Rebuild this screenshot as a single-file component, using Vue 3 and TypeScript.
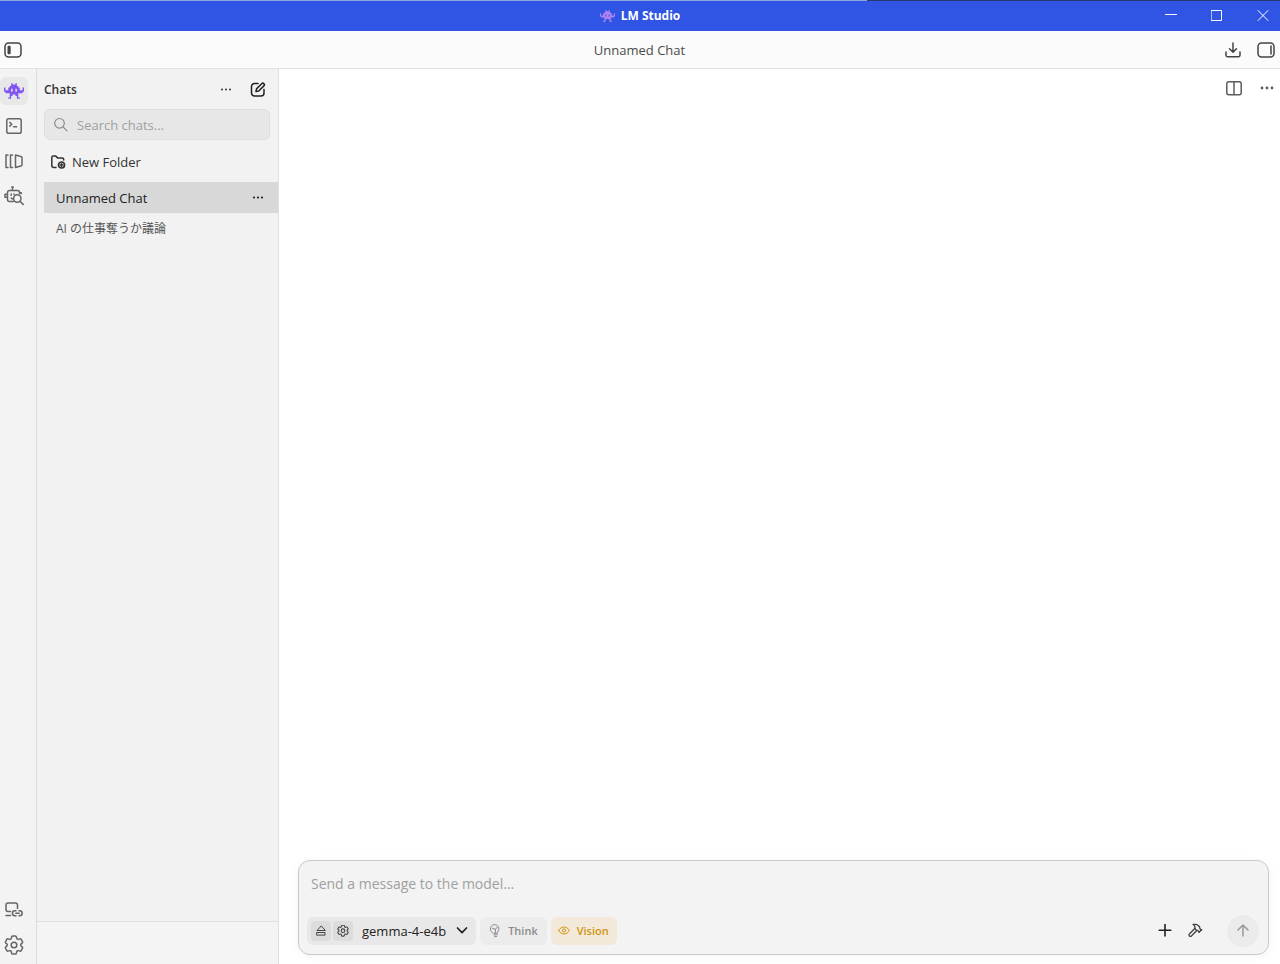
<script setup lang="ts">
import { ref } from 'vue'

interface Chat {
  id: number
  title: string
}

const chats: Chat[] = [
  { id: 1, title: 'Unnamed Chat' },
  { id: 2, title: 'AI の仕事奪うか議論' },
]
const activeId = ref(1)
const query = ref('')
const message = ref('')

const sprite = [
  '.....x..x.....',
  '.....xxxx.....',
  '....xxxxxx....',
  'x..xxxxxxxx..x',
  'x..xx.xx.xx..x',
  'xxxxx.xx.xxxxx',
  '.xxxxxxxxxxxx.',
  '....xxxxxx....',
  '....xx..xx....',
  '....x....x....',
  '...xx....xx...',
]
const spritePath = sprite
  .flatMap((row, y) => [...row].map((c, x) => (c === 'x' ? `M${x} ${y}h1v1h-1z` : '')))
  .join('')

const gearPath =
  'M9.594 3.940c.09-.542.56-.94 1.110-.94h2.593c.55 0 1.020.398 1.110.94l.213 1.281c.063.374.313.686.645.87.074.04.147.083.22.127.325.196.72.257 1.075.124l1.217-.456a1.125 1.125 0 0 1 1.370.49l1.296 2.247a1.125 1.125 0 0 1-.26 1.431l-1.003.827c-.293.241-.438.613-.43.992a7.723 7.723 0 0 1 0 .255c-.008.378.137.75.43.991l1.004.827c.424.35.534.955.26 1.430l-1.298 2.247a1.125 1.125 0 0 1-1.369.491l-1.217-.456c-.355-.133-.75-.072-1.076.124a6.470 6.470 0 0 1-.22.128c-.331.183-.581.495-.644.869l-.213 1.281c-.09.543-.56.94-1.110.94h-2.594c-.55 0-1.019-.398-1.110-.94l-.213-1.281c-.062-.374-.312-.686-.644-.87a6.520 6.520 0 0 1-.22-.127c-.325-.196-.72-.257-1.076-.124l-1.217.456a1.125 1.125 0 0 1-1.369-.49l-1.297-2.247a1.125 1.125 0 0 1 .26-1.431l1.004-.827c.292-.24.437-.613.43-.991a6.932 6.932 0 0 1 0-.255c.007-.38-.138-.751-.43-.992l-1.004-.827a1.125 1.125 0 0 1-.26-1.430l1.297-2.247a1.125 1.125 0 0 1 1.370-.491l1.216.456c.356.133.751.072 1.076-.124.072-.044.146-.086.22-.128.332-.183.582-.495.644-.869l.214-1.280Z'
</script>

<template>
  <div class="app">
    <header class="titlebar">
      <div class="brand">
        <svg class="brand-icon" viewBox="0 0 14 11" aria-hidden="true"><path :d="spritePath" /></svg>
        <span>LM Studio</span>
      </div>
      <div class="window-controls">
        <button aria-label="Minimize"><svg width="12" height="12" viewBox="0 0 12 12"><path d="M0.500 4.500h11" /></svg></button>
        <button aria-label="Maximize"><svg width="12" height="12" viewBox="0 0 12 12"><path d="M.5.5h10v10h-10z" /></svg></button>
        <button aria-label="Close"><svg width="12" height="12" viewBox="0 0 12 12"><path d="M1 .5l10 10M11 .5l-10 10" /></svg></button>
      </div>
    </header>

    <div class="topbar">
      <button class="icon-btn dark" aria-label="Toggle sidebar">
        <svg width="18" height="16" viewBox="0 0 18 16"><rect x="1" y="1" width="16" height="14" rx="3.500" /><rect class="solid" x="3.500" y="3.700" width="3.200" height="8.600" rx="1.200" /></svg>
      </button>
      <h1>Unnamed Chat</h1>
      <div class="topbar-right">
        <button class="icon-btn dark" aria-label="Downloads">
          <svg width="16" height="16" viewBox="0 0 16 16"><path d="M8 1v9M4.500 6.800L8 10.300l3.500-3.500M1 10v3.200A1.500 1.500 0 0 0 2.500 14.700h11a1.500 1.500 0 0 0 1.500-1.500V10" /></svg>
        </button>
        <button class="icon-btn dark" aria-label="Toggle right panel">
          <svg width="18" height="16" viewBox="0 0 18 16"><rect x="1" y="1" width="16" height="14" rx="3.500" /><path d="M14 4v8" /></svg>
        </button>
      </div>
    </div>

    <div class="body">
      <nav class="rail">
        <button class="rail-btn active" aria-label="Chat">
          <svg class="rail-logo" viewBox="0 0 14 11"><path :d="spritePath" /></svg>
        </button>
        <button class="rail-btn" aria-label="Developer">
          <svg width="16" height="16" viewBox="0 0 16 16"><rect x="0.800" y="0.800" width="14.400" height="14.400" rx="1.800" /><path d="M3.800 4.300l2 1.900-2 1.900M7.600 8.800h3" /></svg>
        </button>
        <button class="rail-btn" aria-label="My models">
          <svg width="18" height="15" viewBox="0 0 18 15"><path d="M3 1H1v12.500h2M7.500 1h-2v12.500h2M10.500 1l5.300 1.400a1.300 1.300 0 0 1 1.200 1.300v7.100a1.300 1.300 0 0 1-1.200 1.300l-5.300 1.400z" /></svg>
        </button>
        <button class="rail-btn" aria-label="Discover">
          <svg width="20" height="20" viewBox="0 0 20 20"><path d="M8.500 1.200V4.500M7.700 1h1.600M9.500 15.500H5.500a2 2 0 0 1-2-2V6.500a2 2 0 0 1 2-2h8a2 2 0 0 1 2 2v1M3.500 8.200H1v3h2.500M15.500 6.800h1.700v1M7.200 8v1.300M10 8v.5M7.200 12q.6.800 1.600.9" /><circle cx="13.300" cy="12.500" r="3.700" /><path d="M16 15.200l3.200 3.200" /></svg>
        </button>
        <span class="spacer"></span>
        <button class="rail-btn" aria-label="Linked devices">
          <svg width="18" height="16" viewBox="0 0 18 16"><path d="M5.500 9.500H3a2 2 0 0 1-2-2V3a2 2 0 0 1 2-2h7.500a2 2 0 0 1 2 2v3.500M1 13.500h4.500M11 8.800H9.900a2.400 2.400 0 0 0 0 4.900H11M14 8.800h.7a2.400 2.400 0 0 1 0 4.900H14M10.800 11.300h3.400" /></svg>
        </button>
        <button class="rail-btn" aria-label="Settings">
          <svg width="20" height="20" viewBox="2 2 20 20"><path :d="gearPath" /><circle cx="12" cy="12" r="2.800" /></svg>
        </button>
      </nav>

      <aside class="sidebar">
        <div class="sidebar-head">
          <h2>Chats</h2>
          <button class="icon-btn dots" aria-label="Chat list options"><svg width="12" height="4" viewBox="0 0 12 4"><circle cx="2" cy="1.500" r="1" /><circle cx="6" cy="1.500" r="1" /><circle cx="10" cy="1.500" r="1" /></svg></button>
          <button class="icon-btn ink" aria-label="New chat">
            <svg width="16" height="16" viewBox="0 0 16 16"><path d="M8 1.500H4.500a3 3 0 0 0-3 3V11a3 3 0 0 0 3 3H11a3 3 0 0 0 3-3V7.500M6 9.500l.5-2.600 5.200-5.200a1.500 1.500 0 0 1 2.200 2.200L8.700 9z" /></svg>
          </button>
        </div>
        <label class="search">
          <svg width="16" height="16" viewBox="0 0 16 16" aria-hidden="true"><circle cx="6.500" cy="6.300" r="4.800" /><path d="M10 9.800l4 4" /></svg>
          <input v-model="query" type="text" placeholder="Search chats..." aria-label="Search chats" />
        </label>
        <button class="new-folder">
          <svg width="16" height="16" viewBox="0 0 16 16" aria-hidden="true"><path d="M6 13.500H3.800a2 2 0 0 1-2-2V3.600a1.500 1.500 0 0 1 1.500-1.500h2.500l2 2h4.400a1.500 1.500 0 0 1 1.500 1.500V6" /><circle cx="11.500" cy="11" r="3" stroke-width="1.700" /><path d="M11.500 9.800v2.400M10.300 11h2.400" /></svg>
          <span>New Folder</span>
        </button>
        <ul class="chat-list">
          <li v-for="chat in chats" :key="chat.id" :class="{ selected: chat.id === activeId }">
            <button class="chat-title" @click="activeId = chat.id">{{ chat.title }}</button>
            <button v-if="chat.id === activeId" class="icon-btn dots" aria-label="Chat options"><svg width="12" height="4" viewBox="0 0 12 4"><circle cx="2" cy="1.500" r="1.100" /><circle cx="6" cy="1.500" r="1.100" /><circle cx="10" cy="1.500" r="1.100" /></svg></button>
          </li>
        </ul>
        <div class="sidebar-foot"></div>
      </aside>

      <main class="main">
        <div class="main-tools">
          <button class="icon-btn mid" aria-label="Split view"><svg width="16" height="15" viewBox="0 0 16 15"><rect x="0.800" y="0.800" width="14.400" height="12.900" rx="2" /><path d="M8 1v12.500" /></svg></button>
          <button class="icon-btn dots mid" aria-label="More"><svg width="14" height="4" viewBox="0 0 14 4"><circle cx="2" cy="2" r="1.400" /><circle cx="7" cy="2" r="1.400" /><circle cx="12" cy="2" r="1.400" /></svg></button>
        </div>
        <form class="composer" @submit.prevent>
          <textarea v-model="message" rows="1" placeholder="Send a message to the model..." aria-label="Message"></textarea>
          <div class="composer-row">
            <div class="model">
              <button type="button" class="mini" aria-label="Eject model"><svg width="12" height="12" viewBox="0 0 12 12"><path d="M6 1.200L2 5.500h8zM2 7.500h8v2.600H2z" /></svg></button>
              <button type="button" class="mini" aria-label="Model settings"><svg width="12" height="12" viewBox="2 2.500 20 20"><path :d="gearPath" stroke-width="1.800" /><circle cx="12" cy="12" r="3" stroke-width="1.800" /></svg></button>
              <button type="button" class="model-name">
                <span>gemma-4-e4b</span>
                <svg width="12" height="12" viewBox="0 0 12 12"><path d="M1.500 3L6 7.700 10.500 3" stroke-width="1.700" /></svg>
              </button>
            </div>
            <button type="button" class="chip">
              <svg width="12" height="14" viewBox="0 0 12 14"><path d="M4.300 9.200C2.600 8.400 1.400 6.900 1.400 5A4.200 4.200 0 0 1 9.800 4.600c.2 1.900-1.300 2.700-1.500 4.300zM5 11l3.300-.3M5.600 12.700l2-.2M3.300 4.200l3.200 1.200L8 3.300M6.500 5.400l-.2 3.600" /></svg>
              <span>Think</span>
            </button>
            <button type="button" class="chip vision">
              <svg width="12" height="12" viewBox="0 0 12 12"><path d="M.7 5.500C3 .8 9 .8 11.300 5.500 9 10.200 3 10.200.7 5.500z" /><circle cx="6" cy="5.500" r="1.600" /></svg>
              <span>Vision</span>
            </button>
            <span class="spacer"></span>
            <button type="button" class="icon-btn ink" aria-label="Attach"><svg width="14" height="14" viewBox="0 0 14 14"><path d="M7 .5v11.500M1.200 6.200h11.600" stroke-width="1.600" /></svg></button>
            <button type="button" class="icon-btn dark tool" aria-label="Tools"><svg width="16" height="16" viewBox="0 1 24 24"><g stroke-width="2"><path d="m15 12-8.373 8.373a1 1 0 1 1-3-3L12 9" /><path d="m18 15 4-4" /><path d="m21.500 11.500-1.914-1.914A2 2 0 0 1 19 8.172V7l-2.260-2.260a6 6 0 0 0-4.202-1.756L9 2.960l.92.82A6.180 6.180 0 0 1 12 8.400V10l2 2h1.172a2 2 0 0 1 1.414.586L18.500 14.500" /></g></svg></button>
            <button type="submit" class="send" aria-label="Send"><svg width="14" height="14" viewBox="0 0 14 14"><path d="M7 12V1M2 6l5-5 5 5" /></svg></button>
          </div>
        </form>
      </main>
    </div>
  </div>
</template>

<style>
body {
  margin: 0;
}
</style>

<style scoped>
.app {
  display: flex;
  flex-direction: column;
  height: 100vh;
  overflow: hidden;
  background: #fff;
  color: #333;
  font: 13px/20px 'Open Sans', 'Noto Sans CJK JP', sans-serif;
}
* {
  box-sizing: border-box;
}
button {
  padding: 0;
  border: 0;
  background: none;
  color: inherit;
  font: inherit;
}
svg {
  display: block;
  flex: none;
  fill: none;
  stroke: currentColor;
  stroke-width: 1.500;
  stroke-linecap: round;
  stroke-linejoin: round;
}
h1,
h2 {
  margin: 0;
}
.spacer {
  flex: 1;
}
.titlebar {
  display: grid;
  grid-template-columns: 1fr auto 1fr;
  align-items: center;
  height: 31px;
  flex: none;
  border-top: 1px solid;
  border-image: linear-gradient(90deg, #8ea9df 0 67.700%, #273b6e 67.700%) 1;
  background: #3054e3;
  color: #fff;
}
.brand {
  grid-column: 2;
  display: flex;
  align-items: center;
  gap: 6px;
  font-size: 12px;
  font-weight: 700;
}
.brand-icon {
  width: 15px;
  height: 12px;
  fill: #b183f3;
  stroke: none;
}
.window-controls {
  display: flex;
  justify-content: flex-end;
}
.window-controls button {
  display: grid;
  place-items: center;
  width: 46px;
  height: 28px;
}
.window-controls button:last-child {
  width: 34px;
  margin-left: 6px;
}
.window-controls svg {
  stroke-width: 1;
}
.topbar {
  display: grid;
  grid-template-columns: 1fr auto 1fr;
  align-items: center;
  height: 38px;
  flex: none;
  padding: 0 5px 0 4px;
  border-bottom: 1px solid #e2e2e2;
  background: #fbfbfb;
}
.topbar h1 {
  font-size: 13px;
  font-weight: 400;
  color: #4a4a4a;
}
.topbar-right {
  display: flex;
  align-items: center;
  justify-content: flex-end;
  gap: 16px;
}
.icon-btn {
  display: grid;
  place-items: center;
  justify-self: start;
}
.solid {
  fill: currentColor;
  stroke: none;
}
.dark {
  color: #444;
}
.ink {
  color: #222;
}
.mid {
  color: #5c5c5c;
}
.dots svg {
  fill: currentColor;
  stroke: none;
}
.dots {
  height: 20px;
}
.body {
  display: flex;
  flex: 1;
  min-height: 0;
}
.rail {
  display: flex;
  flex-direction: column;
  gap: 7px;
  width: 37px;
  flex: none;
  padding: 8px 0 5px;
  border-right: 1px solid #dcdcdc;
  background: #f3f3f3;
  color: #666;
}
.rail-btn {
  display: grid;
  place-items: center;
  width: 28px;
  height: 28px;
  border-radius: 6px;
}
.rail-btn.active {
  background: #e8e8e8;
}
.rail-logo {
  width: 20px;
  height: 16px;
  fill: #8255f3;
  stroke: none;
}
.sidebar {
  display: flex;
  flex-direction: column;
  width: 242px;
  flex: none;
  border-right: 1px solid #dfdfdf;
  background: #f2f2f2;
}
.sidebar-head {
  display: flex;
  align-items: center;
  gap: 18px;
  height: 40px;
  padding: 2px 12px 0 7px;
}
.sidebar-head h2 {
  flex: 1;
  font-size: 12px;
  font-weight: 600;
}
.search {
  display: flex;
  align-items: center;
  gap: 8px;
  height: 31px;
  margin: 0 8px 0 7px;
  padding: 0 8px;
  border: 1px solid #dedede;
  border-radius: 6px;
  background: #e7e7e7;
  color: #8a8a8a;
}
.search svg {
  stroke-width: 1.200;
}
input,
textarea {
  flex: 1;
  min-width: 0;
  padding: 0;
  border: 0;
  outline: 0;
  background: none;
  color: #333;
  font: inherit;
  resize: none;
}
::placeholder {
  color: #a0a0a0;
  opacity: 1;
}
.new-folder {
  display: flex;
  align-items: center;
  gap: 6px;
  height: 28px;
  margin: 8px 0 6px 13px;
  color: #333;
}
.chat-list {
  flex: 1;
  margin: 0 0 0 7px;
  padding: 0;
  list-style: none;
}
.chat-list li {
  display: flex;
  align-items: center;
  height: 31px;
  padding: 0 14px 0 12px;
  color: #555;
  font-size: 12px;
}
.chat-list li.selected {
  background: #d8d8d8;
  color: #222;
  font-size: 13px;
}
.chat-title {
  flex: 1;
  text-align: left;
}
.sidebar-foot {
  height: 43px;
  border-top: 1px solid #e1e1e1;
  background: #f4f4f4;
}
.main {
  display: flex;
  flex: 1;
  flex-direction: column;
  justify-content: space-between;
  min-width: 0;
  padding: 9px 11px 9px 19px;
}
.main-tools {
  display: flex;
  align-items: center;
  justify-content: flex-end;
  gap: 18px;
  margin-right: -5px;
}
.composer {
  display: flex;
  flex-direction: column;
  justify-content: space-between;
  height: 95px;
  padding: 12px 9px 9px 8px;
  border: 1px solid #c9c9c9;
  border-radius: 12px;
  background: #f3f3f3;
  box-shadow: 0 1px 10px #0000000d;
}
.composer textarea {
  flex: none;
  height: 22px;
  padding: 0 4px;
  font-size: 14px;
  line-height: 22px;
}
.composer-row {
  display: flex;
  align-items: center;
  gap: 4px;
}
.model {
  display: flex;
  align-items: center;
  gap: 2px;
  height: 28px;
  padding: 0 8px 0 4px;
  border-radius: 6px;
  background: #e8e8e8;
}
.mini {
  display: grid;
  place-items: center;
  width: 20px;
  height: 20px;
  border-radius: 4px;
  background: #dcdcdc;
  color: #444;
}
.mini svg,
.chip svg {
  stroke-width: 1;
}
.model-name {
  display: flex;
  align-items: center;
  gap: 10px;
  margin-left: 7px;
  color: #222;
}
.chip {
  display: flex;
  align-items: center;
  gap: 7px;
  height: 28px;
  padding: 0 9px;
  border-radius: 6px;
  background: #ececec;
  color: #8b8b8b;
  font-size: 11px;
  font-weight: 600;
}
.chip.vision {
  padding: 0 8px 0 7px;
  background: #f2e9da;
  color: #d1940f;
}
.tool {
  margin: 0 20px 0 11px;
}
.send {
  display: grid;
  place-items: center;
  width: 32px;
  height: 32px;
  margin: -2px 0;
  border-radius: 50%;
  background: #ebebeb;
  color: #999;
}
</style>
